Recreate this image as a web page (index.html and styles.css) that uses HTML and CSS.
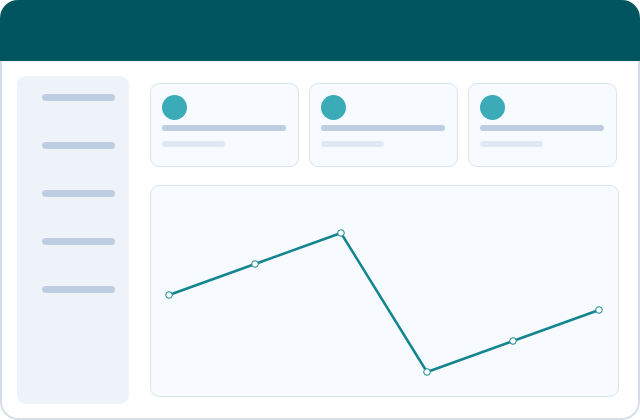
FILE: index.html
```html
<!DOCTYPE html>
<html lang="en">
  <head>
    <meta charset="UTF-8" />
    <meta name="viewport" content="width=device-width, initial-scale=1.0" />
    <title>Dashboard</title>

    <link rel="stylesheet" href="styles.css">
  </head>
  <body>
    <div class="frame">
      <div class="header"></div>

      <div class="content">
        <div class="sidebar">
          <div class="nav_bar"></div>
          <div class="nav_bar"></div>
          <div class="nav_bar"></div>
          <div class="nav_bar"></div>
          <div class="nav_bar"></div>
        </div>

        <div class="main">
          <div class="cards">
            <div class="card">
              <div class="dot"></div>
              <div class="line_long"></div>
              <div class="line_short"></div>
            </div>
            <div class="card">
              <div class="dot"></div>
              <div class="line_long"></div>
              <div class="line_short"></div>
            </div>
            <div class="card">
              <div class="dot"></div>
              <div class="line_long"></div>
              <div class="line_short"></div>
            </div>
          </div>

          <div class="chart">
            <svg width="469" height="212" viewBox="0 0 469 212">
              <polyline points="18,109 104,78 190,47 276,186 362,155 448,124"
                fill="none" stroke="#12858f" stroke-width="2.5" stroke-linejoin="round" />
              <circle cx="18" cy="109" r="3.3" />
              <circle cx="104" cy="78" r="3.3" />
              <circle cx="190" cy="47" r="3.3" />
              <circle cx="276" cy="186" r="3.3" />
              <circle cx="362" cy="155" r="3.3" />
              <circle cx="448" cy="124" r="3.3" />
            </svg>
          </div>
        </div>
      </div>
    </div>
  </body>
</html>
```

FILE: styles.css
```css
body {
  margin: 0;
  background-color: white;
}

.frame {
  width: 640px;
  height: 420px;
  border-radius: 18px;
  overflow: hidden;
  background-color: white;
}

.header {
  height: 61px;
  background-color: #01555f;
}

.content {
  display: flex;
  padding: 15px 14px 14px 15px;
  height: 359px;
  box-sizing: border-box;
  border: 2px solid #d4dde9;
  border-top: none;
  border-radius: 0 0 18px 18px;
}

.sidebar {
  width: 112px;
  box-sizing: border-box;
  padding: 18px 0 0 25px;
  background-color: #eef3fa;
  border-radius: 9px;
  display: flex;
  flex-direction: column;
  gap: 41px;
}

.nav_bar {
  width: 73px;
  height: 7px;
  border-radius: 4px;
  background-color: #bfcde3;
}

.main {
  margin-left: 21px;
  padding-top: 7px;
  display: flex;
  flex-direction: column;
  gap: 18px;
}

.cards {
  display: grid;
  grid-template-columns: repeat(3, 149px);
  gap: 10px;
}

.card {
  height: 84px;
  box-sizing: border-box;
  padding: 11px 0 0 11px;
  border: 1px solid #dbe4f1;
  border-radius: 9px;
  background-color: #f7faff;
}

.dot {
  width: 25px;
  height: 25px;
  border-radius: 50%;
  background-color: #3aabb7;
}

.line_long {
  margin-top: 5px;
  width: 124px;
  height: 6px;
  border-radius: 3px;
  background-color: #bfcde3;
}

.line_short {
  margin-top: 10px;
  width: 63px;
  height: 6px;
  border-radius: 3px;
  background-color: #e0e8f3;
}

.chart {
  width: 469px;
  height: 212px;
  box-sizing: border-box;
  border: 1px solid #dbe4f1;
  border-radius: 9px;
  background-color: #f7faff;
  position: relative;
}

.chart svg {
  position: absolute;
  left: 0;
  top: 0;
}

.chart circle {
  fill: white;
  stroke: #12858f;
  stroke-width: 1;
}
```
